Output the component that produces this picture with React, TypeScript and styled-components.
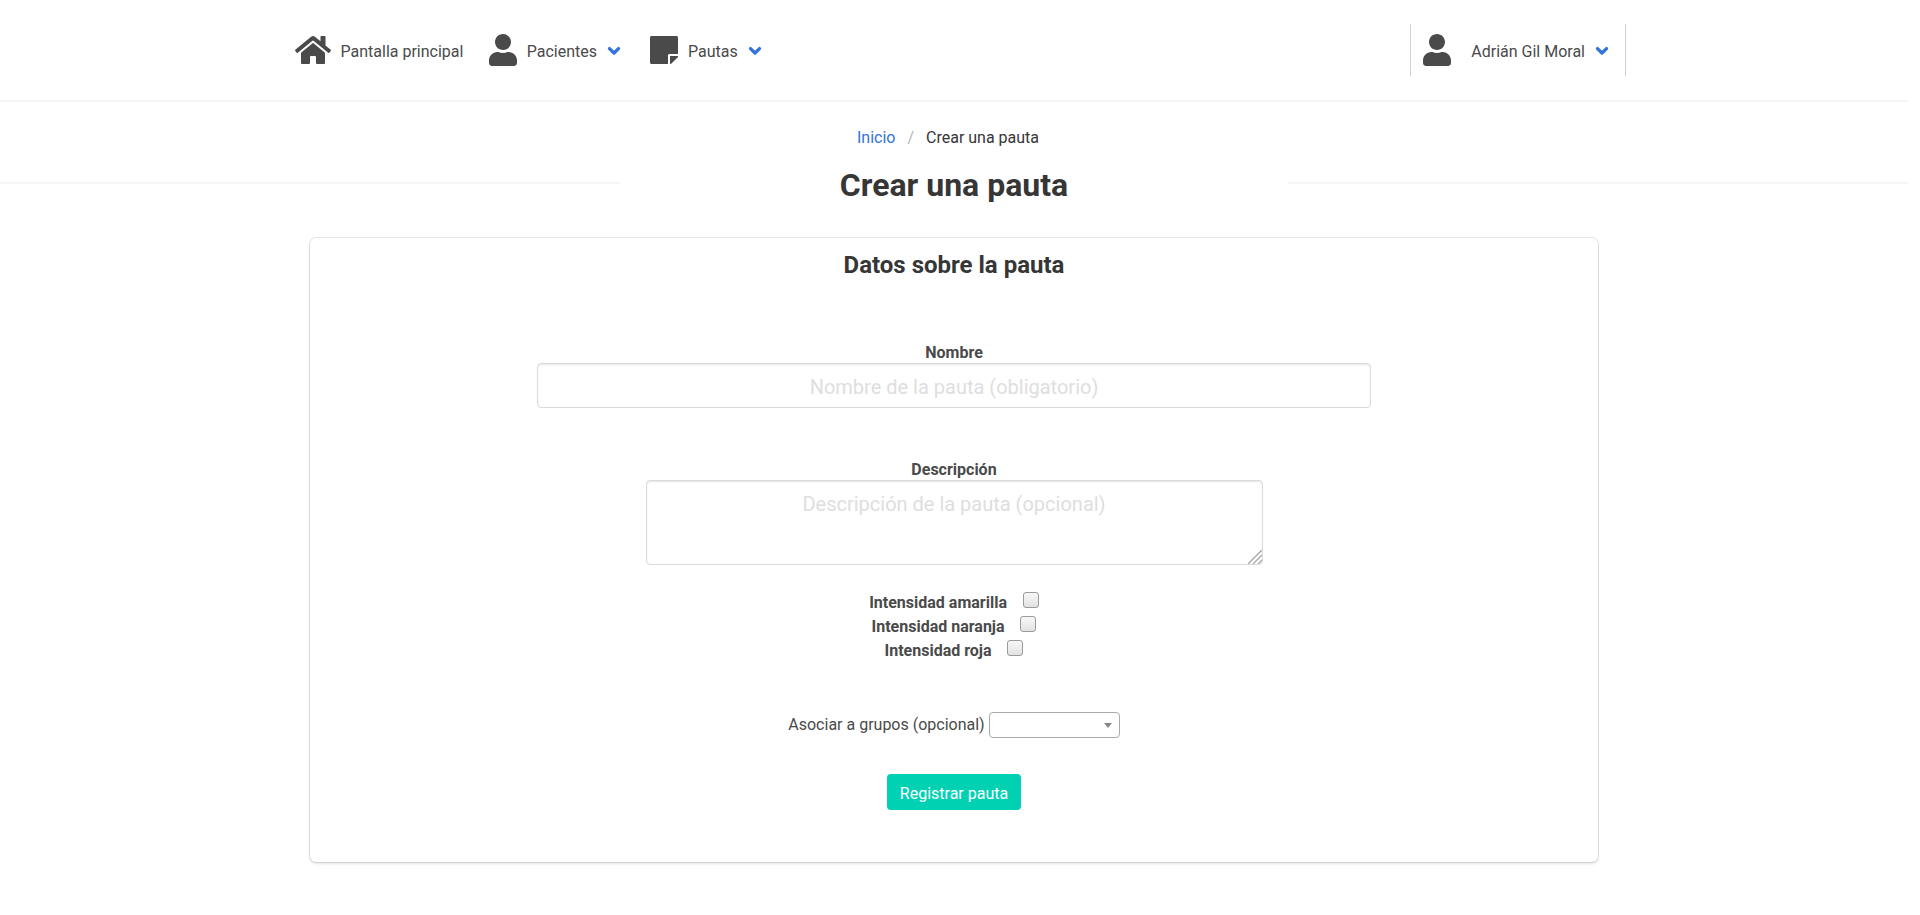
import React from "react";
import styled, { createGlobalStyle } from "styled-components";
import { FaHome, FaUser, FaStickyNote } from "react-icons/fa";

const GlobalStyle = createGlobalStyle`
  *, *::before, *::after { box-sizing: border-box; }
  body {
    margin: 0;
    background: #fff;
    color: #4a4a4a;
    font: 400 16px/24px Roboto, sans-serif;
  }
`;

const Page = styled.div`
  width: 1908px;
  min-height: 915px;
`;

const Header = styled.header`
  display: flex;
  justify-content: space-between;
  align-items: center;
  height: 102px;
  padding: 0 282px 0 283px;
  border-bottom: 2px solid #f5f5f5;
`;

const NavStart = styled.nav`
  display: flex;
`;

const NavItem = styled.a`
  display: flex;
  align-items: center;
  height: 52px;
  padding: 0 12px;
`;

const IconBox = styled.span<{ $width?: number }>`
  display: flex;
  align-items: center;
  justify-content: center;
  width: ${(p) => p.$width ?? 32}px;
  height: 32px;
  flex: none;

  svg {
    flex: none;
    height: 32px;
    width: ${(p) => p.$width ?? 32}px;
  }
`;

const NavLabel = styled.span<{ $gap?: number }>`
  margin-left: ${(p) => p.$gap ?? 8}px;
  padding-top: 3px;
`;

const ArrowSvg = styled.svg<{ $end: number }>`
  width: 14px;
  height: 10px;
  margin: 2px ${(p) => p.$end}px 0 10px;
  flex: none;
`;

const Arrow = ({ end = 4 }: { end?: number }) => (
  <ArrowSvg $end={end} viewBox="0 0 14 10" fill="none" stroke="#3273dc" strokeWidth="3.3">
    <path d="M2.5 2.6 7 7l4.500-4.400" strokeLinecap="round" strokeLinejoin="round" />
  </ArrowSvg>
);

const Account = styled(NavItem)`
  padding: 0 12px 0 10px;
  border: solid #cfcfcf;
  border-width: 0 1px;
`;

const Breadcrumb = styled.nav`
  display: flex;
  justify-content: center;
  margin-top: 24px;
  padding-right: 12px;
  color: #363636;
`;

const Crumb = styled.a`
  color: #3273dc;
`;

const Slash = styled.span`
  margin: 0 12px;
  color: #b5b5b5;
`;

const TitleRow = styled.div`
  display: flex;
  align-items: flex-start;
  margin-top: 17px;
`;

const Rule = styled.span`
  flex: 1;
  height: 2px;
  margin-top: 15px;
  background: #f5f5f5;
`;

const Title = styled.h1`
  width: 668px;
  margin: 0;
  font-size: 32px;
  line-height: 36px;
  font-weight: 700;
  text-align: center;
  color: #363636;
`;

const Card = styled.form`
  display: flex;
  flex-direction: column;
  align-items: center;
  width: 1288px;
  height: 624px;
  margin: 35px auto 0;
  border-radius: 6px;
  box-shadow: 0 2px 3px rgba(10, 10, 10, 0.1), 0 0 0 1px rgba(10, 10, 10, 0.1);
`;

const Subtitle = styled.h2`
  margin: 14px 0 0;
  font-size: 24px;
  line-height: 27px;
  font-weight: 700;
  color: #363636;
`;

const Label = styled.label`
  font-weight: 700;
`;

const Field = styled.div<{ $top: number }>`
  display: flex;
  flex-direction: column;
  align-items: center;
  margin-top: ${(p) => p.$top}px;

  ${Label} {
    height: 22px;
  }
`;

const Input = styled.input`
  width: 834px;
  height: 45px;
  padding: 2px 14px 0;
  border: 1px solid #dbdbdb;
  border-radius: 4px;
  box-shadow: inset 0 1px 2px rgba(10, 10, 10, 0.1);
  font: 400 20px/30px Roboto, sans-serif;
  text-align: center;
  outline: none;

  &::placeholder {
    color: #dedede;
    opacity: 1;
  }
`;

const TextAreaBox = styled.div`
  position: relative;
`;

const TextArea = styled(Input).attrs({ as: "textarea" })`
  display: block;
  width: 617px;
  height: 85px;
  padding: 8px 12px;
  resize: none;
`;

const Grip = styled.svg`
  position: absolute;
  right: 1px;
  bottom: 1px;
  width: 14px;
  height: 14px;
`;

const Checks = styled.div`
  margin-top: 25px;
`;

const CheckRow = styled.div`
  display: flex;
  justify-content: center;
  height: 24px;

  ${Label} {
    padding-top: 1px;
  }
`;

const Checkbox = styled.span`
  width: 16px;
  height: 16px;
  margin: 2px 0 0 15.9px;
  border: 1px solid #9b9b9b;
  border-radius: 3px;
  background: linear-gradient(#f8f8f8, #e2e2e2);
`;

const GroupRow = styled.div`
  display: flex;
  align-items: center;
  gap: 4px;
  height: 28px;
  margin-top: 49px;
`;

const Select = styled.div`
  display: flex;
  align-items: center;
  justify-content: flex-end;
  width: 131px;
  height: 26px;
  padding-right: 7px;
  border: 1px solid #aaa;
  border-radius: 4px;

  &::after {
    content: "";
    border: solid transparent;
    border-width: 5px 4px 0;
    border-top-color: #888;
  }
`;

const Submit = styled.button`
  width: 134px;
  height: 36px;
  margin-top: 35px;
  padding: 3px 0 0;
  border: 0;
  border-radius: 4px;
  background: #00d1b2;
  color: #fff;
  font: 400 16px/24px Roboto, sans-serif;
`;

const intensities = ["amarilla", "naranja", "roja"];

export default function App() {
  return (
    <Page>
      <GlobalStyle />
      <Header>
        <NavStart>
          <NavItem>
            <IconBox $width={36}><FaHome /></IconBox>
            <NavLabel $gap={9.5}>Pantalla principal</NavLabel>
          </NavItem>
          <NavItem>
            <IconBox><FaUser /></IconBox>
            <NavLabel $gap={7.25}>Pacientes</NavLabel>
            <Arrow end={3} />
          </NavItem>
          <NavItem>
            <IconBox><FaStickyNote /></IconBox>
            <NavLabel>Pautas</NavLabel>
            <Arrow />
          </NavItem>
        </NavStart>
        <Account>
          <IconBox><FaUser /></IconBox>
          <NavLabel $gap={18}>Adrián Gil Moral</NavLabel>
          <Arrow />
        </Account>
      </Header>
      <Breadcrumb>
        <Crumb>Inicio</Crumb>
        <Slash>/</Slash>
        <span>Crear una pauta</span>
      </Breadcrumb>
      <TitleRow>
        <Rule />
        <Title>Crear una pauta</Title>
        <Rule />
      </TitleRow>
      <Card>
        <Subtitle>Datos sobre la pauta</Subtitle>
        <Field $top={62}>
          <Label>Nombre</Label>
          <Input placeholder="Nombre de la pauta (obligatorio)" />
        </Field>
        <Field $top={50}>
          <Label>Descripción</Label>
          <TextAreaBox>
            <TextArea placeholder="Descripción de la pauta (opcional)" />
            <Grip viewBox="0 0 14 14" stroke="#a8a8a8" strokeWidth="1.4">
              <path d="M0 14 14 0M5 14l9-9M10 14l4-4" />
            </Grip>
          </TextAreaBox>
        </Field>
        <Checks>
          {intensities.map((name) => (
            <CheckRow key={name}>
              <Label>Intensidad {name}</Label>
              <Checkbox />
            </CheckRow>
          ))}
        </Checks>
        <GroupRow>
          <span>Asociar a grupos (opcional)</span>
          <Select />
        </GroupRow>
        <Submit type="button">Registrar pauta</Submit>
      </Card>
    </Page>
  );
}
